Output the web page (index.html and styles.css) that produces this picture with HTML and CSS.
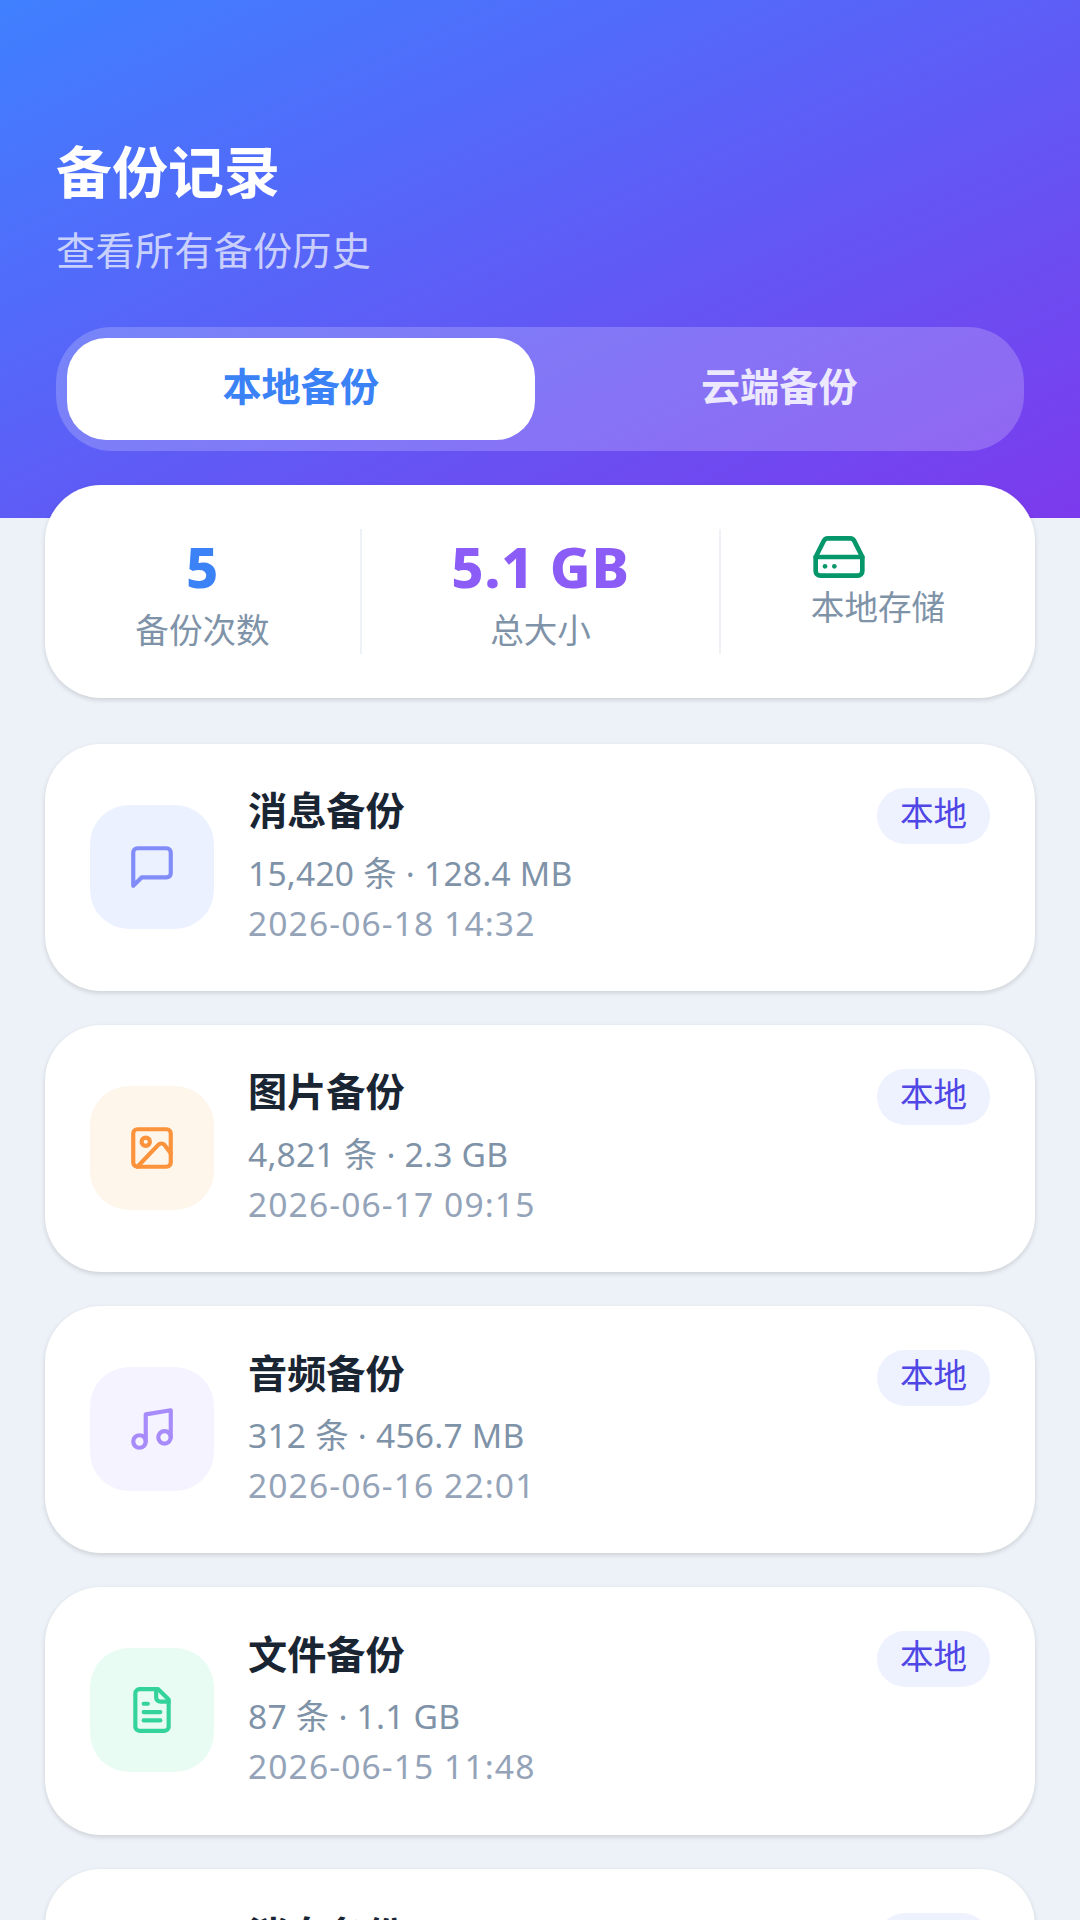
FILE: index.html
```html
<!DOCTYPE html>
<html lang="zh">
<head>
<meta charset="utf-8">
<title>备份记录</title>
<link rel="stylesheet" href="styles.css">
</head>
<body>
<div class="page">
  <header class="hero">
    <h1 class="hero-title">备份记录</h1>
    <p class="hero-sub">查看所有备份历史</p>
    <div class="tabs">
      <div class="tab tab-active">本地备份</div>
      <div class="tab">云端备份</div>
    </div>
  </header>
  <section class="stats">
    <div class="stat">
      <div class="stat-value blue">5</div>
      <div class="stat-label">备份次数</div>
    </div>
    <div class="stat stat-mid">
      <div class="stat-value purple">5.1 GB</div>
      <div class="stat-label">总大小</div>
    </div>
    <div class="stat">
      <div class="store">
        <svg class="stat-icon" viewBox="0 0 24 24" fill="none" stroke="#059669" stroke-width="2" stroke-linecap="round" stroke-linejoin="round"><path d="M22 12H2"/><path d="M5.45 5.11 2 12v6a2 2 0 0 0 2 2h16a2 2 0 0 0 2-2v-6l-3.45-6.89A2 2 0 0 0 16.76 4H7.24a2 2 0 0 0-1.79 1.11z"/><path d="M6 16h.01"/><path d="M10 16h.01"/></svg>
        <div class="stat-label store-label">本地存储</div>
      </div>
    </div>
  </section>
  <main class="list">
    <article class="card">
      <div class="icon-box bg-blue">
        <svg class="icon" viewBox="0 0 24 24" fill="none" stroke="#818CF8" stroke-width="2" stroke-linecap="round" stroke-linejoin="round"><path d="M3 21V5a2 2 0 0 1 2-2h14a2 2 0 0 1 2 2v10a2 2 0 0 1-2 2H7z"/></svg>
      </div>
      <div class="info">
        <div class="name">消息备份</div>
        <div class="meta">15,420 条 · 128.4 MB</div>
        <div class="date">2026-06-18 14:32</div>
      </div>
      <span class="chip">本地</span>
    </article>
    <article class="card">
      <div class="icon-box bg-orange">
        <svg class="icon" viewBox="0 0 24 24" fill="none" stroke="#FB923C" stroke-width="2" stroke-linecap="round" stroke-linejoin="round"><rect x="3" y="3" width="18" height="18" rx="2"/><circle cx="9" cy="9" r="2"/><path d="M5 21 15 10.5a2 2 0 0 1 3 0l3 4"/></svg>
      </div>
      <div class="info">
        <div class="name">图片备份</div>
        <div class="meta">4,821 条 · 2.3 GB</div>
        <div class="date">2026-06-17 09:15</div>
      </div>
      <span class="chip">本地</span>
    </article>
    <article class="card">
      <div class="icon-box bg-violet">
        <svg class="icon" viewBox="0 0 24 24" fill="none" stroke="#A78BFA" stroke-width="2" stroke-linecap="round" stroke-linejoin="round"><path d="M9 18V5l12-2v13"/><circle cx="6" cy="18" r="3"/><circle cx="18" cy="16" r="3"/></svg>
      </div>
      <div class="info">
        <div class="name">音频备份</div>
        <div class="meta">312 条 · 456.7 MB</div>
        <div class="date">2026-06-16 22:01</div>
      </div>
      <span class="chip">本地</span>
    </article>
    <article class="card">
      <div class="icon-box bg-green">
        <svg class="icon" viewBox="0 0 24 24" fill="none" stroke="#34D399" stroke-width="2" stroke-linecap="round" stroke-linejoin="round"><path d="M15 2H6a2 2 0 0 0-2 2v16a2 2 0 0 0 2 2h12a2 2 0 0 0 2-2V7z"/><path d="M14 2v4a2 2 0 0 0 2 2h4"/><path d="M10 9H8"/><path d="M16 13H8"/><path d="M16 17H8"/></svg>
      </div>
      <div class="info">
        <div class="name">文件备份</div>
        <div class="meta">87 条 · 1.1 GB</div>
        <div class="date">2026-06-15 11:48</div>
      </div>
      <span class="chip">本地</span>
    </article>
    <article class="card">
      <div class="icon-box bg-blue"></div>
      <div class="info">
        <div class="name">消息备份</div>
      </div>
      <span class="chip">本地</span>
    </article>
  </main>
</div>
</body>
</html>
```
FILE: styles.css
```css
* { box-sizing: border-box; }
html, body { margin: 0; padding: 0; }
body {
  background: #edf2f8;
  font-family: "Noto Sans", "Noto Sans CJK SC", sans-serif;
}
.page { width: 1080px; height: 1920px; overflow: hidden; }

.hero {
  height: 518px;
  padding: 132px 56px 0;
  background: linear-gradient(155deg, #3f80ff 0%, #7c3aed 100%);
}
.hero-title {
  margin: 0;
  font-size: 56px;
  line-height: 78px;
  font-weight: 700;
  color: #fff;
}
.hero-sub {
  margin: 12px 0 0;
  font-size: 39.2px;
  line-height: 56px;
  letter-spacing: 0.2px;
  color: rgba(255, 255, 255, 0.7);
}
.tabs {
  display: flex;
  gap: 11px;
  margin-top: 48.5px;
  padding: 11px;
  height: 124px;
  border-radius: 56px;
  background: rgba(255, 255, 255, 0.2);
}
.tab {
  flex: 1;
  display: flex;
  align-items: center;
  justify-content: center;
  padding-bottom: 10px;
  border-radius: 39px;
  font-size: 39.2px;
  font-weight: 700;
  color: rgba(255, 255, 255, 0.85);
}
.tab-active { background: #fff; color: #3b82f6; }

.stats {
  position: relative;
  display: grid;
  grid-template-columns: 315px 1fr 314px;
  margin: -33px 45px 0;
  padding: 44px 0;
  height: 213px;
  border-radius: 56px;
  background: #fff;
  box-shadow: 0 2px 5px rgba(0, 0, 0, 0.14);
}
.stat { display: flex; flex-direction: column; align-items: center; }
.stat-mid { border-left: 2px solid #eef2f7; border-right: 2px solid #eef2f7; }
.stat-value {
  margin: 1px 0 4px;
  font-size: 56px;
  line-height: 73px;
  font-weight: 800;
  letter-spacing: 0.8px;
}
.blue { color: #3b82f6; }
.purple { color: #8b5cf6; }
.stat-label {
  font-size: 33.6px;
  line-height: 47px;
  color: #7f93a8;
}
.store { display: flex; flex-direction: column; align-items: flex-start; }
.stat-icon { width: 56px; height: 56px; }
.store-label { margin-top: -1px; }

.list {
  display: flex;
  flex-direction: column;
  gap: 33.9px;
  margin: 45.5px 45px 0;
}
.card {
  display: flex;
  flex: none;
  align-items: flex-start;
  height: 247.4px;
  padding: 45px;
  border-radius: 56px;
  background: #fff;
  box-shadow: 0 2px 5px rgba(0, 0, 0, 0.14);
}
.icon-box {
  flex: none;
  display: flex;
  align-items: center;
  justify-content: center;
  width: 124px;
  height: 124px;
  margin-top: 16px;
  border-radius: 39px;
}
.bg-blue { background: #ebf1ff; }
.bg-orange { background: #fff6eb; }
.bg-violet { background: #f5f3ff; }
.bg-green { background: #e8fcf4; }
.icon { width: 50px; height: 50px; }
.info { flex: 1; min-width: 0; margin-left: 34px; }
.name {
  margin-top: -2.5px;
  font-size: 39.2px;
  line-height: 47px;
  font-weight: 700;
  color: #1a2533;
}
.meta {
  margin-top: 16.5px;
  font-size: 33.6px;
  line-height: 47px;
  letter-spacing: 0.2px;
  color: #7f93a8;
}
.date {
  margin-top: 3px;
  font-size: 33.6px;
  line-height: 47px;
  letter-spacing: 1.1px;
  color: #94a3b8;
}
.chip {
  flex: none;
  width: 113px;
  height: 56px;
  margin-top: -1px;
  border-radius: 28px;
  background: #eef2ff;
  font-size: 33.6px;
  line-height: 50px;
  text-align: center;
  color: #4f46e5;
}
```
